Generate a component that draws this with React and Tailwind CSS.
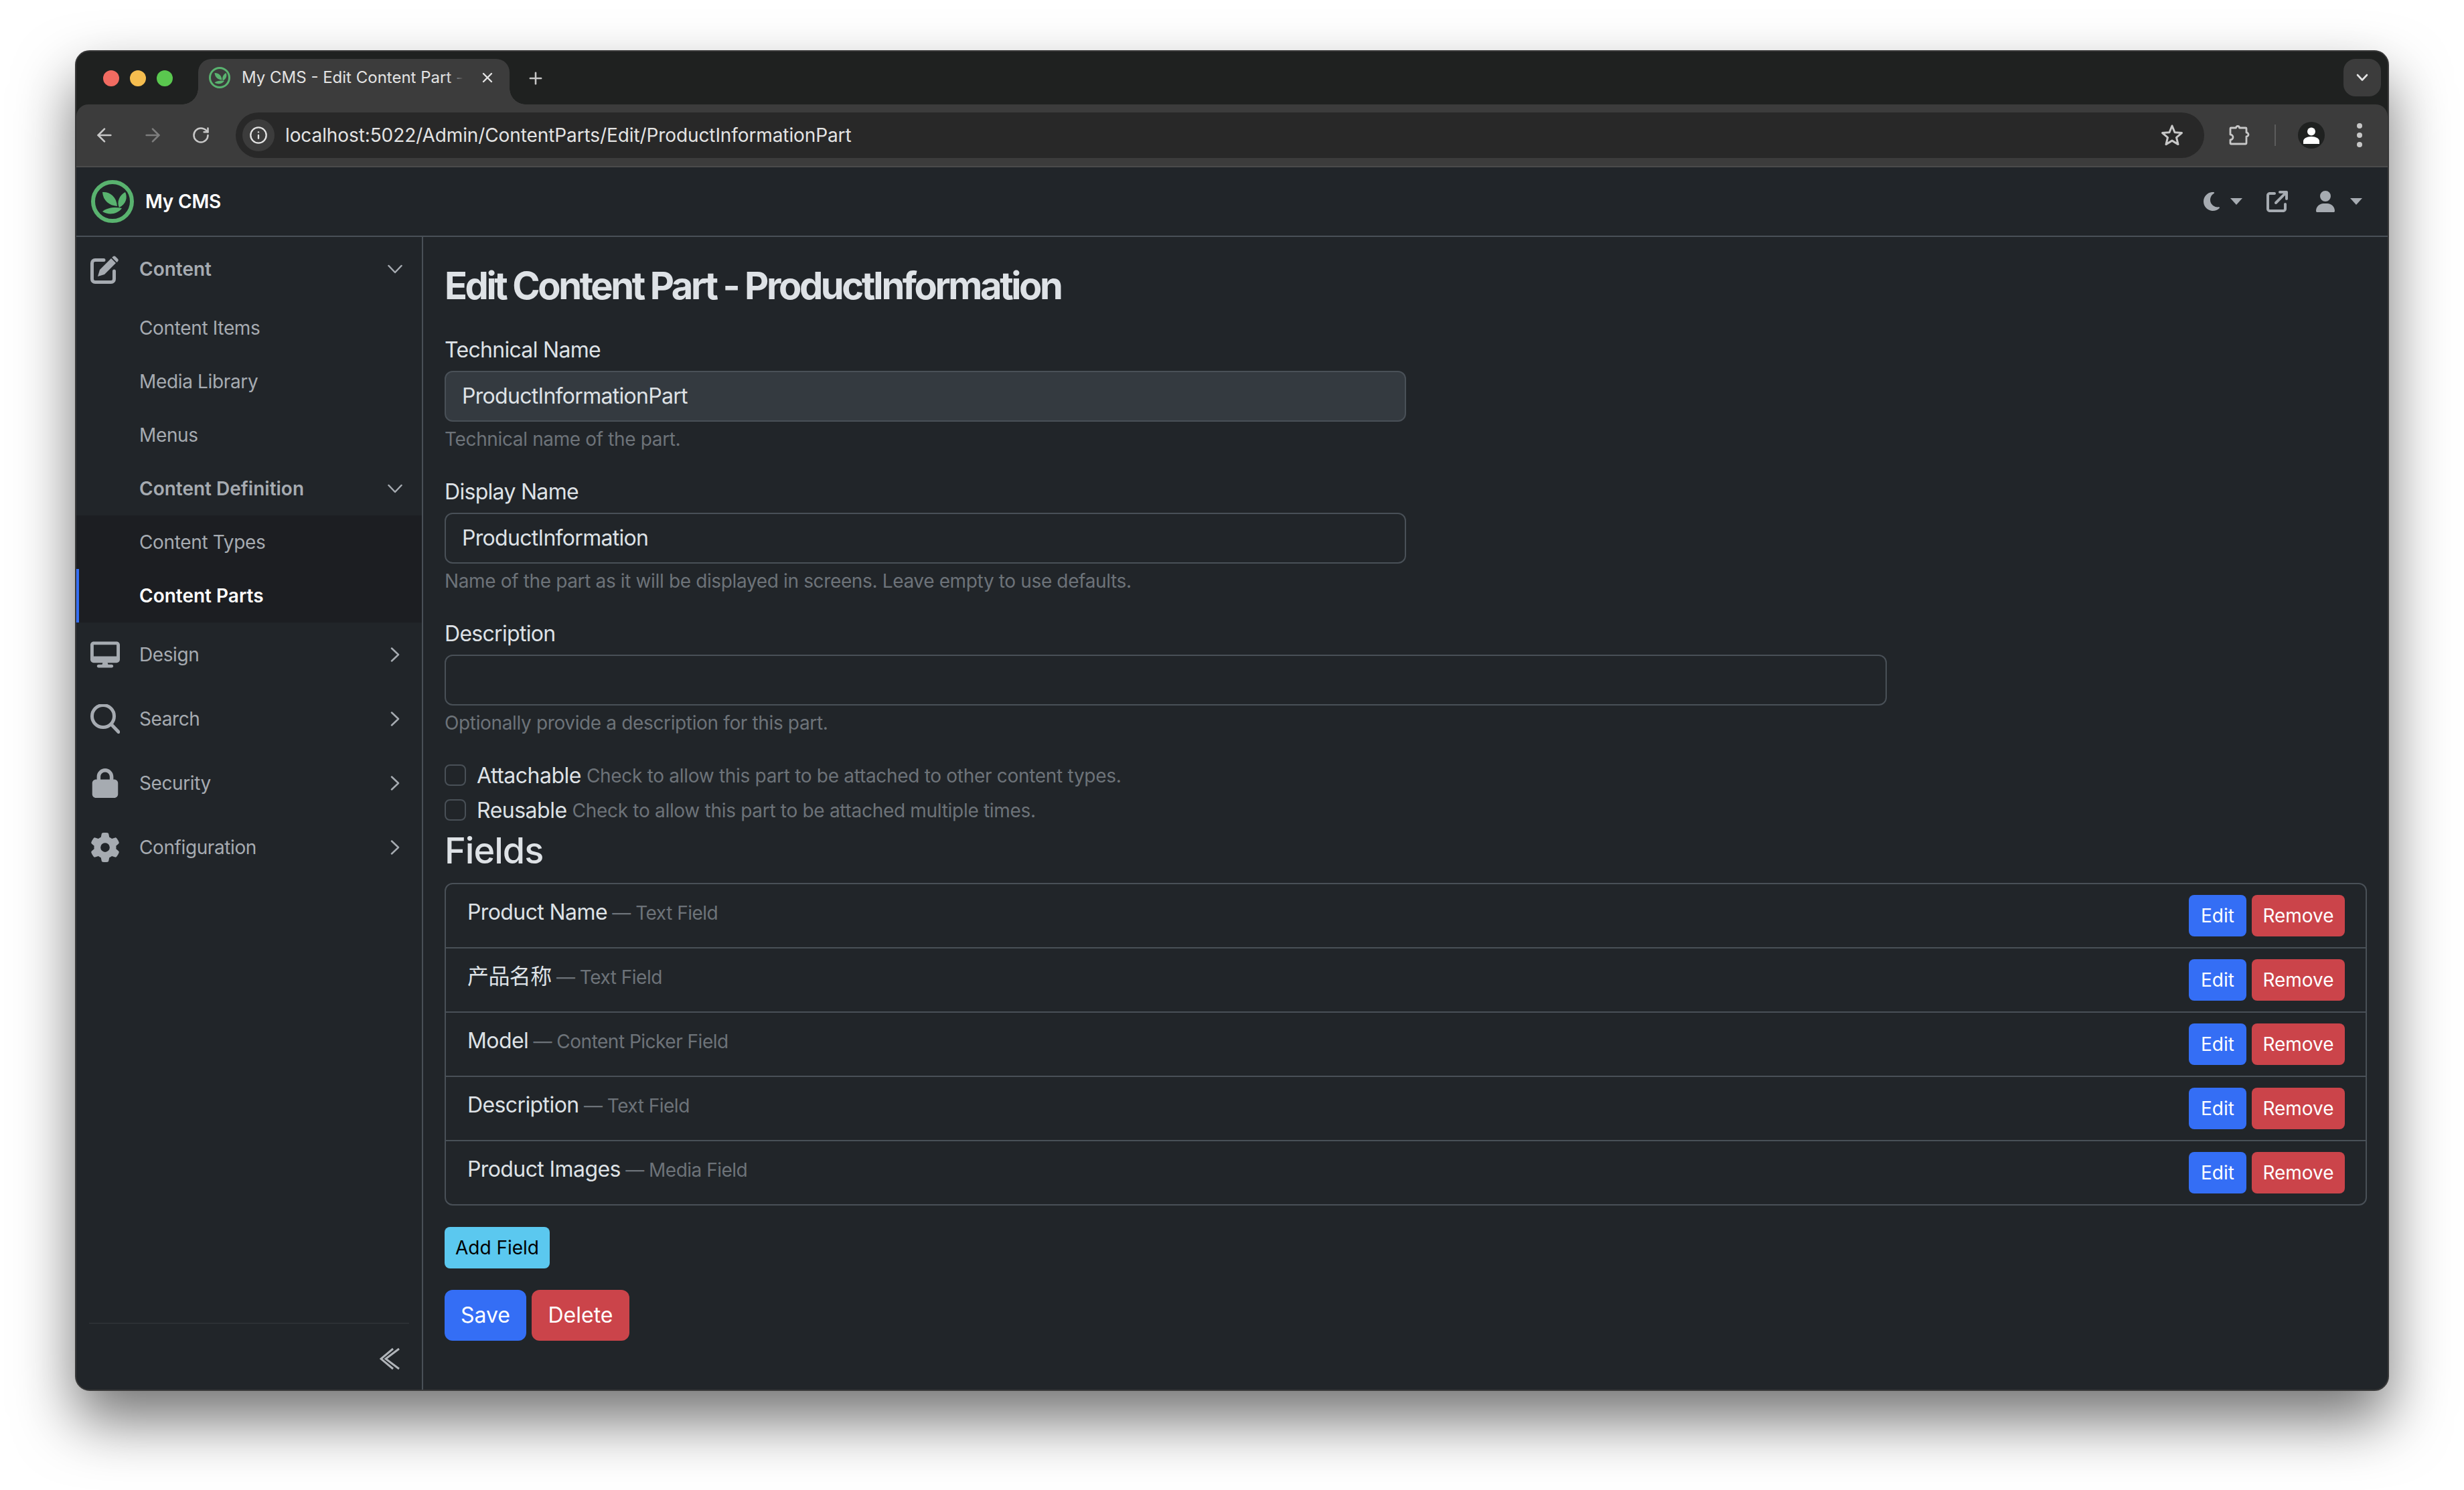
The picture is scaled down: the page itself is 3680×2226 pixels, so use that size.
import { ArrowLeft, ArrowRight, RotateCw, Info, Plus, X } from 'lucide-react';
import { FaDesktop, FaLock, FaGear, FaMoon, FaUser, FaArrowUpRightFromSquare } from 'react-icons/fa6';

const FIELDS = [
  { name: 'Product Name', type: 'Text Field' },
  { name: '产品名称', type: 'Text Field' },
  { name: 'Model', type: 'Content Picker Field' },
  { name: 'Description', type: 'Text Field' },
  { name: 'Product Images', type: 'Media Field' },
];

const Logo = ({ size }) => (
  <svg width={size} height={size} viewBox="0 0 64 64" fill="#59b36f" className="shrink-0">
    <circle cx="32" cy="32" r="29" fill="none" stroke="#59b36f" strokeWidth="6" />
    <path d="M17 18C27 17 38 24 39 39 27 38 18 31 17 18Z" />
    <path d="M51 18C55 26 52 36 42 41 38 33 42 23 51 18Z" />
    <path d="M17 47C24 41 36 40 46 42 40 51 26 53 17 47Z" />
  </svg>
);

const Caret = () => (
  <div className="w-0 h-0 border-x-[9px] border-x-transparent border-t-[10px] border-t-[#a6abb1]" />
);

const ChevronDown = () => (
  <svg width="22" height="14" viewBox="0 0 22 14" fill="none" stroke="#a6abb1" strokeWidth="2.5" strokeLinecap="round" strokeLinejoin="round">
    <path d="M1.5 2 11 12 20.5 2" />
  </svg>
);

const ChevronRight = () => (
  <svg width="14" height="22" viewBox="0 0 14 22" fill="none" stroke="#a6abb1" strokeWidth="2.5" strokeLinecap="round" strokeLinejoin="round">
    <path d="M2 1.5 12 11 2 20.5" />
  </svg>
);

const SearchIcon = () => (
  <svg width="44" height="44" viewBox="0 0 44 44" fill="none" stroke="#a6abb1" strokeWidth="5" strokeLinecap="round">
    <circle cx="19" cy="18" r="16.5" />
    <path d="M31 30 42 41.5" />
  </svg>
);

const EditIcon = () => (
  <svg width="44" height="44" viewBox="0 0 44 44" fill="#a6abb1">
    <path d="M20 8.5H7A4.5 4.5 0 0 0 2.5 13V37A4.5 4.5 0 0 0 7 41.5H31A4.5 4.5 0 0 0 35.5 37V25" fill="none" stroke="#a6abb1" strokeWidth="5" strokeLinecap="round" />
    <path d="M11 33 14 23 31 6 38 13 21 30z" />
    <path d="M33.5 3.5a3 3 0 0 1 4.2 0l3 3a3 3 0 0 1 0 4.2l-1.2 1.2-7.2-7.2z" />
  </svg>
);

const SubItem = ({ label, bold, active, dark }) => (
  <div className={`relative h-20 flex items-center pl-[94px] pr-[29px] pb-px justify-between text-[28px] ${dark ? 'bg-[#1c1e22]' : ''} ${bold ? 'font-semibold' : 'tracking-[-0.35px]'} ${active ? 'text-white' : 'text-[#a6abb1]'}`}>
    {active && <div className="absolute left-[-2px] top-0 bottom-0 w-[6px] bg-[#346ef5]" />}
    <span>{label}</span>
    {bold && !active && <ChevronDown />}
  </div>
);

const TopItem = ({ icon, label, open }) => (
  <div className="h-24 flex items-center pl-[18px] pr-[29px] pb-px text-[28px] text-[#a6abb1]">
    <div className="w-[50px] flex justify-center">{icon}</div>
    <span className={`ml-[26px] flex-1 ${open ? 'font-semibold' : 'tracking-[-0.4px]'}`}>{label}</span>
    {open ? <ChevronDown /> : <div className="mr-1"><ChevronRight /></div>}
  </div>
);

const Field = ({ label, value, help, wide, disabled }) => (
  <div className="mb-[34px]">
    <div className="text-[32px] leading-[48px] tracking-[-0.7px] mb-[7px] text-[#dee2e6]">{label}</div>
    <div className={`h-[76px] flex items-center px-6 border-2 border-[#495057] rounded-[12px] text-[32px] tracking-[-0.7px] text-[#dee2e6] ${wide ? 'w-[2154px]' : 'w-[1436px]'} ${disabled ? 'bg-[#343a40]' : ''}`}>
      {value}
    </div>
    <div className="mt-[5px] text-[28px] leading-[42px] tracking-[-0.36px] text-[#6d7379]">{help}</div>
  </div>
);

const Check = ({ label, help }) => (
  <div className="h-12 mb-1 flex items-center">
    <div className="w-8 h-8 mb-[3px] border-2 border-[#495057] rounded-[8px]" />
    <span className="ml-4 text-[32px] tracking-[-0.5px] text-[#dee2e6]">{label}</span>
    <span className="ml-2 text-[28px] tracking-[-0.3px] text-[#6d7379]">{help}</span>
  </div>
);

export default function App() {
  return (
    <div className="min-h-screen bg-white pl-[112px] pt-[75px] font-['Inter','Noto_Sans_CJK_SC',sans-serif]">
      <div className="w-[3456px] h-[2003px] flex flex-col overflow-hidden border-2 border-[#3a3a3a] rounded-[22px] bg-[#212529] shadow-[0_44px_88px_rgba(0,0,0,0.55)]">
        {/* tab strip */}
        <div className="h-[79px] shrink-0 pt-[11px] pl-10 pr-[10px] flex items-start bg-[#1f2120]">
          <div className="flex gap-4 mt-[17px]">
            <div className="w-6 h-6 rounded-full bg-[#f16b61]" />
            <div className="w-6 h-6 rounded-full bg-[#f5bd4f]" />
            <div className="w-6 h-6 rounded-full bg-[#5ac84f]" />
          </div>
          <div className="relative ml-[38px] w-[465px] h-[68px] pb-3 pl-4 flex items-center bg-[#3c3c3c] rounded-t-[20px]">
            <div className="absolute left-[-24px] bottom-0 w-6 h-6 bg-[radial-gradient(circle_at_0_0,#1f2120_23.5px,#3c3c3c_24px)]" />
            <div className="absolute right-[-24px] bottom-0 w-6 h-6 bg-[radial-gradient(circle_at_100%_0,#1f2120_23.5px,#3c3c3c_24px)]" />
            <Logo size={32} />
            <div className="relative ml-[17px] whitespace-nowrap text-[24px] text-[#e3e3e3]">
              My CMS - Edit Content Part -
              <div className="absolute right-0 top-0 bottom-0 w-6 bg-gradient-to-r from-transparent to-[#3c3c3c]" />
            </div>
            <X size={24} color="#e3e3e3" strokeWidth={2.4} className="ml-auto mr-[21px] shrink-0" />
          </div>
          <Plus size={28} color="#c7c7c7" strokeWidth={2.2} className="ml-[25px] mt-[15px] shrink-0" />
          <div className="ml-auto w-14 h-14 rounded-[18px] bg-[#3c3c3c] flex items-center justify-center">
            <svg width="18" height="12" viewBox="0 0 18 12" fill="none" stroke="#e3e3e3" strokeWidth="2.6" strokeLinecap="round" strokeLinejoin="round">
              <path d="M2 2l7 7.5L16 2" />
            </svg>
          </div>
        </div>

        {/* toolbar */}
        <div className="h-[94px] shrink-0 bg-[#1f2120]">
          <div className="h-full pl-[6px] pr-[38px] flex items-center bg-[#3c3c3c] border-b-2 border-[#4b4b4b] rounded-t-[18px]">
            <div className="w-[72px] flex justify-center"><ArrowLeft size={32} color="#c7c7c7" strokeWidth={2} /></div>
            <div className="w-[72px] flex justify-center"><ArrowRight size={32} color="#7d7d7d" strokeWidth={2} /></div>
            <div className="w-[72px] flex justify-center"><RotateCw size={28} color="#c7c7c7" strokeWidth={2.2} /></div>
            <div className="ml-4 flex-1 h-[68px] pl-[10px] pr-[31px] flex items-center bg-[#282828] rounded-full">
              <div className="w-12 h-12 rounded-full bg-[#3c3c3c] flex items-center justify-center">
                <Info size={28} color="#e3e3e3" strokeWidth={2} />
              </div>
              <span className="ml-4 flex-1 text-[28px] tracking-[-0.1px] text-[#e3e3e3]">localhost:5022/Admin/ContentParts/Edit/ProductInformationPart</span>
              <svg width="34" height="34" viewBox="0 0 34 34" fill="none" stroke="#c7c7c7" strokeWidth="3" strokeLinejoin="round">
                <path d="M17 3l4 9.8 10.5.8-8 6.8 2.5 10.2-9-5.5-9 5.5 2.5-10.2-8-6.8 10.5-.8z" />
              </svg>
            </div>
            <div className="ml-[20px] w-16 flex justify-center">
              <svg width="32" height="34" viewBox="0 0 32 34" fill="none" stroke="#c7c7c7" strokeWidth="2.8" strokeLinejoin="round">
                <path d="M4 6h7.5a2.5 2.5 0 0 1 5 0H26a1 1 0 0 1 1 1v6a3 3 0 0 1 0 6v10a1 1 0 0 1-1 1H4a1 1 0 0 1-1-1v-5a4 4 0 0 0 0-8V7a1 1 0 0 1 1-1z" />
              </svg>
            </div>
            <div className="ml-[21px] w-[2px] h-8 bg-[#5c5c5c]" />
            <div className="ml-[33px] w-10 h-10 rounded-full bg-[#1f2120] flex items-center justify-center">
              <svg width="26" height="26" viewBox="0 0 26 26" fill="#fff">
                <circle cx="13" cy="7.5" r="6" />
                <path d="M1 26v-4c0-4 5-7 12-7s12 3 12 7v4z" />
              </svg>
            </div>
            <div className="ml-12 flex flex-col gap-[6px]">
              <div className="w-2 h-2 rounded-full bg-[#c7c7c7]" />
              <div className="w-2 h-2 rounded-full bg-[#c7c7c7]" />
              <div className="w-2 h-2 rounded-full bg-[#c7c7c7]" />
            </div>
          </div>
        </div>

        {/* admin navbar */}
        <div className="h-[104px] shrink-0 pl-[22px] pr-[38px] flex items-center border-b-2 border-[#495057]">
          <Logo size={64} />
          <span className="ml-[17px] flex-1 text-[28px] font-semibold tracking-[-0.2px] text-white">My CMS</span>
          <FaMoon size={32} color="#a6abb1" />
          <div className="ml-3"><Caret /></div>
          <div className="ml-9"><FaArrowUpRightFromSquare size={32} color="#a6abb1" /></div>
          <div className="ml-10"><FaUser size={32} color="#a6abb1" /></div>
          <div className="ml-[21px]"><Caret /></div>
        </div>

        <div className="flex-1 flex min-h-0">
          {/* sidebar */}
          <aside className="w-[518px] shrink-0 flex flex-col border-r-2 border-[#495057]">
            <TopItem open label="Content" icon={<EditIcon />} />
            <SubItem label="Content Items" />
            <SubItem label="Media Library" />
            <SubItem label="Menus" />
            <SubItem label="Content Definition" bold />
            <SubItem label="Content Types" dark />
            <SubItem label="Content Parts" dark bold active />
            <TopItem label="Design" icon={<FaDesktop size={44} color="#a6abb1" />} />
            <TopItem label="Search" icon={<SearchIcon />} />
            <TopItem label="Security" icon={<FaLock size={44} color="#a6abb1" />} />
            <TopItem label="Configuration" icon={<FaGear size={44} color="#a6abb1" />} />
            <div className="mt-auto mx-[19px] h-[100px] flex justify-end border-t-2 border-[#2c3034]">
              <svg width="30" height="34" viewBox="0 0 30 34" fill="none" stroke="#b0b4b9" strokeWidth="3" className="mt-[35px] mr-[14px]">
                <path d="M20 2 2 17l18 15" />
                <path d="M29 2 9 17l20 15" />
              </svg>
            </div>
          </aside>

          {/* main */}
          <main className="flex-1 min-w-0 pl-8 pr-[31px] pt-10">
            <h1 className="text-[56px] leading-[67px] font-bold tracking-[-3.4px] text-[#dee2e6] mb-[38px]">
              Edit Content Part - ProductInformation
            </h1>
            <Field label="Technical Name" value="ProductInformationPart" help="Technical name of the part." disabled />
            <Field label="Display Name" value="ProductInformation" help="Name of the part as it will be displayed in screens. Leave empty to use defaults." />
            <Field label="Description" help="Optionally provide a description for this part." wide />
            <Check label="Attachable" help="Check to allow this part to be attached to other content types." />
            <Check label="Reusable" help="Check to allow this part to be attached multiple times." />
            <h2 className="mt-[6px] text-[54px] leading-[60px] font-medium tracking-[-1px] text-[#dee2e6] mb-[18px]">Fields</h2>

            <div className="border-2 border-[#495057] rounded-[12px] divide-y-2 divide-[#495057]">
              {FIELDS.map((field) => (
                <div key={field.name} className="h-24 last:h-[94px] pl-8 pr-[31px] pt-4 flex justify-between">
                  <div className="pt-[2px] leading-[48px]">
                    <span className="text-[32px] tracking-[-0.6px] text-[#dee2e6]">{field.name}</span>
                    <span className="text-[28px] tracking-[-0.5px] text-[#6d7379]"> — {field.type}</span>
                  </div>
                  <div className="flex gap-2 h-[62px]">
                    <button className="w-[86px] rounded-lg bg-[#346ef5] text-[28px] text-white">Edit</button>
                    <button className="w-[139px] rounded-lg bg-[#cb444a] text-[28px] text-white">Remove</button>
                  </div>
                </div>
              ))}
            </div>

            <button className="mt-8 block h-[62px] w-[157px] rounded-lg bg-[#5bc8ef] text-[28px] text-black">Add Field</button>
            <div className="mt-8 flex gap-2">
              <button className="h-[76px] w-[122px] rounded-[12px] bg-[#346ef5] text-[32px] text-white">Save</button>
              <button className="h-[76px] w-[146px] rounded-[12px] bg-[#cb444a] text-[32px] text-white">Delete</button>
            </div>
          </main>
        </div>
      </div>
    </div>
  );
}
